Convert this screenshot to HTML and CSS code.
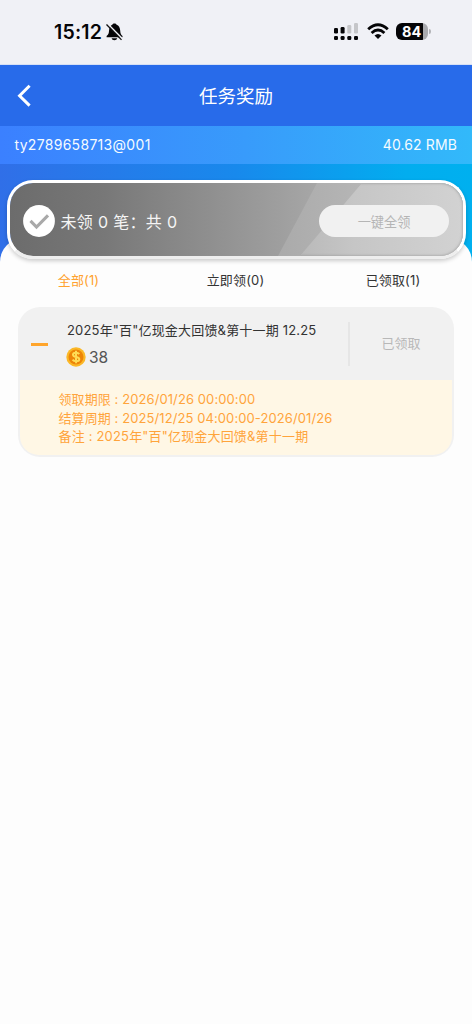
FILE: index.html
```html
<!DOCTYPE html>
<html lang="zh-CN">
<head>
<meta charset="utf-8">
<title>任务奖励</title>
<link rel="stylesheet" href="styles.css">
</head>
<body>
<div class="status">
  <div class="clock"><span class="time">15:12</span>
    <svg class="bell" width="17" height="18" viewBox="0 0 17 18"><path d="M.6 14.300v-1.200c1.700-1.200 2.200-2.500 2.400-5C3.200 4.600 4.400 2.300 6.300 1.700c.5-1.600 3.800-1.600 4.300 0 2.200.8 3.400 2.900 3.600 5.900.2 2.900.6 4.200 2.300 5.500v1.200z" fill="#050507"/><path d="M5.600 15.200h5.600c-.4 2.600-5.200 2.600-5.600 0z" fill="#050507"/><path d="M1.400.5l15.200 15.500" stroke="#f0f1f6" stroke-width="1.500"/><path d="M.5 1.500l15 15.400" stroke="#111" stroke-width="1.300"/></svg>
  </div>
  <div class="signals">
    <svg width="26" height="18" viewBox="0 0 26 18"><g fill="#050507"><rect x="1" y="5" width="4" height="5.500" rx="1.300"/><rect x="7.600" y="4" width="4" height="6.500" rx="1.300"/><rect x="1" y="13" width="4" height="4" rx="1.300"/><rect x="7.600" y="13" width="4" height="4" rx="1.300"/><rect x="14.300" y="13" width="4" height="4" rx="1.300"/><rect x="21" y="13" width="4" height="4" rx="1.300"/></g><g fill="#c5c6c9"><rect x="14.300" y="2" width="4" height="8.500" rx="1.300"/><rect x="21" y="0" width="4" height="10.500" rx="1.300"/></g></svg>
    <svg class="wifi" width="22" height="17" viewBox="0 0 22 17"><g fill="none" stroke="#050507" stroke-width="2.900"><path d="M1.200 6.200Q11-2.800 20.800 6.200"/><path d="M4.600 10Q11 4.200 17.400 10"/></g><path d="M7.500 12.500Q11 9.500 14.500 12.500L11 16z" fill="#050507"/></svg>
    <div class="battery"><span>84</span></div><i class="battery-tip"></i>
  </div>
</div>
<header class="nav">
  <svg class="back" width="14" height="24" viewBox="0 0 14 24"><path d="M12.600 1.800L2.600 11.700l10 9.900" fill="none" stroke="#fff" stroke-width="3"/></svg>
  <h1>任务奖励</h1>
</header>
<div class="account"><span class="user">ty2789658713@001</span><span class="money">40.62 RMB</span></div>
<section class="hero">
  <div class="banner">
    <div class="summary">
      <svg width="32" height="32" viewBox="0 0 32 32"><circle cx="16" cy="16" r="15.900" fill="#fff"/><path d="M7.500 15.800l6 6.200L25 10.300" fill="none" stroke="#a9a9a9" stroke-width="3.100"/></svg>
      <span>未领 0 笔：共 0</span>
    </div>
    <button class="claim">一键全领</button>
  </div>
</section>
<main class="sheet">
  <nav class="tabs"><span class="active">全部(1)</span><span>立即领(0)</span><span>已领取(1)</span></nav>
  <article class="reward">
    <div class="head">
      <i class="minus"></i>
      <div class="info">
        <div class="title">2025年"百"亿现金大回馈&amp;第十一期 12.25</div>
        <div class="amount">
          <svg width="20" height="20" viewBox="0 0 20 20"><circle cx="10" cy="10" r="9.700" fill="#fbb827"/><circle cx="10" cy="10" r="7.500" fill="#ed8508"/><path d="M13.200 7.100C12 5.200 7 5 7 7.700c0 3.100 6.300 1.500 6.300 4.500 0 2.700-5.300 2.600-6.700.4M10 3.700v12.600" fill="none" stroke="#ffdc55" stroke-width="2"/></svg>
          <span>38</span>
        </div>
      </div>
      <div class="state">已领取</div>
    </div>
    <div class="details">
      <p class="deadline">领取期限 : 2026/01/26 00:00:00</p>
      <p class="period">结算周期 : 2025/12/25 04:00:00-2026/01/26</p>
      <p class="remark">备注 : 2025年"百"亿现金大回馈&amp;第十一期</p>
    </div>
  </article>
</main>
</body>
</html>
```
FILE: styles.css
```css
* { box-sizing: border-box; }
body {
  margin: 0;
  min-height: 1024px;
  background: #fdfdfd;
  font-family: Inter, "Noto Sans CJK SC", sans-serif;
  color: #333;
}
svg { display: block; flex: none; }
.status {
  height: 65px;
  padding: 0 41px 0 54px;
  background: #f0f1f6;
  border-bottom: 1px solid #d6e0f5;
  display: flex;
  justify-content: space-between;
}
.clock { display: flex; padding-top: 20px; line-height: 24px; }
.time { width: 52px; font-size: 19.5px; font-weight: 600; letter-spacing: .2px; color: #050507; }
.bell { margin-top: 3px; }
.signals { display: flex; padding-top: 23px; }
.wifi { margin-left: 8px; }
.battery {
  width: 32px; height: 17px;
  margin-left: 7px;
  border-radius: 6px;
  background: linear-gradient(90deg, #050507 27px, #aaabaf 27px);
  color: #fff;
  font-size: 14.500px;
  font-weight: 700;
  line-height: 17px;
  padding-left: 6px;
}
.battery-tip { width: 2px; height: 5px; margin: 6px 0 0 1px; background: #b4b5b9; border-radius: 0 3px 3px 0; }
.nav {
  height: 61px;
  padding: 0 17px;
  background: #286bea;
  color: #fff;
  display: grid;
  grid-template-columns: 20px 1fr 20px;
  align-items: center;
}
.nav h1 { margin: 0; text-align: center; font-size: 18.500px; font-weight: 400; line-height: 26px; }
.account {
  height: 38px;
  padding: 0 15px 2px 14.500px;
  background: linear-gradient(90deg, #3b80ff, #389bfb 52%, #32b9fa);
  color: #f5fbff;
  display: flex;
  justify-content: space-between;
  align-items: center;
  font-size: 14px;
}
.user { letter-spacing: .3px; }
.money { letter-spacing: .12px; }
.hero {
  height: 98px;
  padding: 16px 6px 0 7px;
  background: linear-gradient(90deg, #306fe8, #1889ec 50%, #02adef 86%, #00b0ef);
}
.banner {
  position: relative;
  z-index: 1;
  height: 79px;
  padding: 0 14px 0 13px;
  border: 3px solid #fff;
  border-bottom-color: #eee;
  border-radius: 26px;
  background: linear-gradient(90deg, #6c6c6c, #777 20%, #929292 47%, #a9a9a9 70%) padding-box;
  box-shadow: 0 2px 4px #0003;
  display: flex;
  align-items: center;
  justify-content: space-between;
}
/* diagonal light bands on the right of the banner */
.banner::before, .banner::after {
  content: "";
  position: absolute;
  inset: 0;
  z-index: -1;
  border-radius: 23px;
}
.banner::before { background: linear-gradient(90deg, #aaa 59%, #b6b6b6 78%); clip-path: polygon(307px 0, 100% 0, 100% 100%, 268px 100%); }
.banner::after {
  background: linear-gradient(90deg, #b8b8b8 63%, #c6c6c6 76%, #d2d2d2);
  clip-path: polygon(352px 0, 100% 0, 100% 100%, 290px 100%);
  box-shadow: inset 0 0 2px 1px #9998;
}
.summary { display: flex; align-items: center; gap: 6px; margin-top: 3px; color: #f5f5f5; font-size: 16px; letter-spacing: .32px; white-space: pre; }
.summary span { margin-left: -.5px; }
.claim {
  width: 130px; height: 32px;
  margin-top: 3px;
  padding: 0;
  border: 0;
  border-radius: 16px;
  background: #f1f1f1;
  color: #b5b5b5;
  font: 13.200px/34px Inter, "Noto Sans CJK SC", sans-serif;
}
.sheet {
  position: relative;
  margin-top: -24px;
  padding: 25px 18px 0;
  border-radius: 24px 24px 0 0;
  background: #fdfdfd;
}
.tabs { display: grid; grid-template-columns: 121px 193px 122px; text-align: center; font-size: 13px; letter-spacing: .15px; line-height: 34px; height: 44px; }
.tabs .active { color: #ffa22f; }
.reward { height: 150px; border-radius: 22px; background: #f1f1f1; overflow: hidden; padding: 0 2px 2px; }
.head { height: 73px; display: flex; padding: 15px 0 0 11px; }
.minus { width: 17px; height: 3px; margin-top: 21px; background: #ffa52c; flex: none; }
.info { width: 281px; margin-left: 19px; flex: none; white-space: nowrap; }
.title { font-size: 13px; letter-spacing: .18px; line-height: 17px; }
.amount { display: flex; align-items: center; gap: 3px; margin: 8px 0 0 -1px; height: 20px; color: #555; font-size: 15.500px; }
.state { width: 106px; height: 44px; border-left: 2px solid #e6e6e6; text-align: center; color: #b8b8b8; font-size: 13px; line-height: 43px; }
.details { height: 75px; padding: 10px 0 0 38.500px; background: #fff7e5; border-radius: 0 0 19px 19px; color: #ffa43b; font-size: 13px; line-height: 18.500px; white-space: nowrap; }
.details p { margin: 0; }
.deadline, .period { letter-spacing: .09px; }
.remark { letter-spacing: .18px; }
```
